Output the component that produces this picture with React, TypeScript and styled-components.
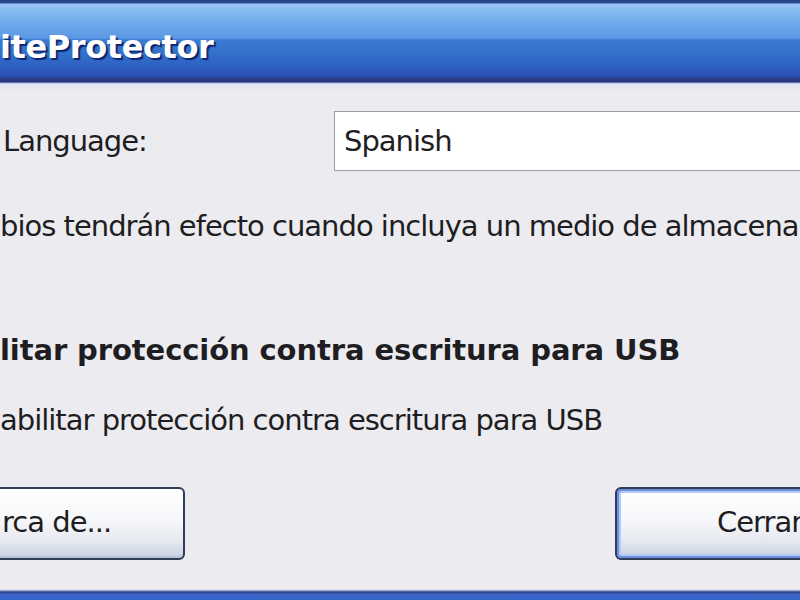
import React from "react";
import styled, { createGlobalStyle } from "styled-components";

const Global = createGlobalStyle`
  html, body { margin: 0; padding: 0; background: #ecebef; overflow: hidden; }
  #root { width: 800px; height: 600px; }
`;

const Window = styled.div`
  width: 800px;
  height: 600px;
  display: flex;
  flex-direction: column;
  overflow: hidden;
  background: #ecebef;
  font-family: "DejaVu Sans", Verdana, sans-serif;
  color: #1e1e22;
`;

const TitleBar = styled.div`
  height: 84px;
  flex: none;
  display: flex;
  align-items: center;
  box-sizing: border-box;
  background: linear-gradient(
    to bottom,
    #23407e 0px,
    #2c4c94 3px,
    #9cc6f8 4px,
    #86bcf2 10px,
    #70acec 22px,
    #5c98e4 38px,
    #3a7ad2 40px,
    #3472cc 52px,
    #2e60c2 66px,
    #2a50b8 76px,
    #2c3e84 79px,
    #26347a 82px,
    #aab8e2 83px,
    #d6ddf2 84px
  );
`;

const Title = styled.span`
  font-family: "DejaVu Sans", sans-serif;
  font-weight: bold;
  font-size: 32px;
  letter-spacing: -0.4px;
  color: #ffffff;
  text-shadow: 2px 2px 1px #0c2470;
  margin-top: 10px;
`;

const Content = styled.div`
  flex: 1;
  display: flex;
  flex-direction: column;
  background: linear-gradient(to bottom, #e2e5f3 0px, #ecebef 8px);
`;

const LanguageRow = styled.div`
  display: flex;
  align-items: center;
  margin-top: 27px;
  height: 60px;
`;

const Label = styled.span`
  width: 334px;
  flex: none;
  padding-left: 3px;
  box-sizing: border-box;
  font-size: 29px;
  letter-spacing: -1px;
`;

const Select = styled.div`
  flex: none;
  width: 500px;
  height: 60px;
  box-sizing: border-box;
  border: 1px solid #9c9ca4;
  border-right: none;
  background: #ffffff;
  display: flex;
  align-items: center;
  padding-left: 9px;
  font-size: 29px;
  letter-spacing: -1px;
`;

const Text = styled.div<{ $bold?: boolean; $top: number }>`
  white-space: nowrap;
  font-size: 29px;
  letter-spacing: ${(p) => (p.$bold ? "-0.1px" : "-1px")};
  font-weight: ${(p) => (p.$bold ? "bold" : "normal")};
  margin-top: ${(p) => p.$top}px;
  line-height: 36px;
`;

const ButtonRow = styled.div`
  display: flex;
  justify-content: space-between;
  margin-top: 49px;
`;

const Button = styled.div<{ $default?: boolean }>`
  height: 73px;
  box-sizing: border-box;
  border: 2px solid #2f3d58;
  border-radius: 6px;
  display: flex;
  align-items: center;
  font-size: 29px;
  letter-spacing: -1px;
  background: linear-gradient(to bottom, #ffffff 0%, #f6f7fa 45%, #e6e9f0 75%, #c8cfe0 100%);
  box-shadow: ${(p) =>
    p.$default
      ? "inset 0 0 0 2px #6a8ee0, inset 0 0 0 4px #b4c8f4"
      : "inset 0 -2px 0 #b9c2d6"};
`;

const LeftButton = styled(Button)`
  width: 190px;
  margin-left: -5px;
  padding-left: 5px;
  padding-bottom: 4px;
`;

const RightButton = styled(Button)`
  width: 240px;
  margin-right: -55px;
  padding-left: 100px;
  padding-bottom: 4px;
`;

const BottomEdge = styled.div`
  margin-top: auto;
  height: 11px;
  background: linear-gradient(
    to bottom,
    #f4f4f8 0px,
    #c6cce4 1px,
    #2c3e80 3px,
    #3c62c4 5px,
    #3464c8 11px
  );
`;

export default function App() {
  return (
    <>
      <Global />
      <Window>
        <TitleBar>
          <Title>iteProtector</Title>
        </TitleBar>
        <Content>
          <LanguageRow>
            <Label>Language:</Label>
            <Select>Spanish</Select>
          </LanguageRow>
          <Text $top={37}>bios tendrán efecto cuando incluya un medio de almacenamiento</Text>
          <Text $top={88} $bold>litar protección contra escritura para USB</Text>
          <Text $top={34}>abilitar protección contra escritura para USB</Text>
          <ButtonRow>
            <LeftButton>rca de...</LeftButton>
            <RightButton $default>Cerrar</RightButton>
          </ButtonRow>
          <BottomEdge />
        </Content>
      </Window>
    </>
  );
}
